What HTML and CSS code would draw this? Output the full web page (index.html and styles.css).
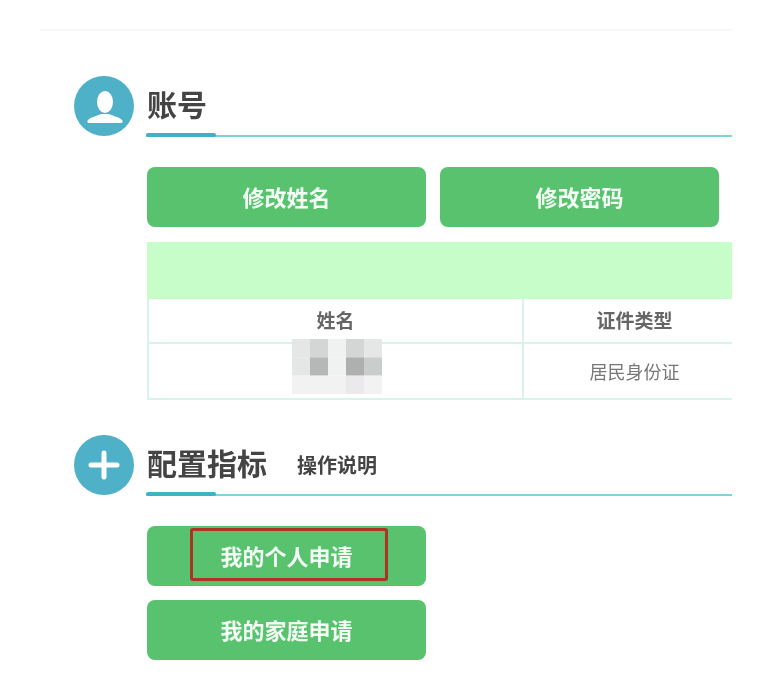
FILE: index.html
```html
<!DOCTYPE html>
<html lang="zh-CN">
<head>
<meta charset="utf-8">
<title>账号</title>
<link rel="stylesheet" href="styles.css">
</head>
<body>
<main class="page">
  <div class="top-rule"></div>

  <section class="section section-account">
    <svg class="badge" viewBox="0 0 60 60" aria-hidden="true">
      <circle cx="30" cy="30" r="30" fill="#4fb1c8"/>
      <ellipse cx="31" cy="26" rx="8" ry="11" fill="#fff"/>
      <path d="M15 47c-2 0-2-2-1-3 3-3 9-4 13-6h8c4 2 10 3 13 6 1 1 1 3-1 3z" fill="#fff"/>
    </svg>
    <div class="body">
      <h2 class="heading"><span class="title">账号</span></h2>
      <div class="btn-row">
        <button class="btn">修改姓名</button>
        <button class="btn">修改密码</button>
      </div>
      <table class="info">
        <colgroup><col class="col-name"><col class="col-type"></colgroup>
        <tr class="band"><td colspan="2"></td></tr>
        <tr class="head"><th>姓名</th><th>证件类型</th></tr>
        <tr class="row">
          <td class="masked">
            <svg class="mosaic" viewBox="0 0 5 3" preserveAspectRatio="none" aria-hidden="true">
              <rect class="c1" x="0" y="0" width="1" height="1"/><rect class="c2" x="1" y="0" width="1" height="1"/><rect class="c3" x="2" y="0" width="1" height="1"/><rect class="c2" x="3" y="0" width="1" height="1"/><rect class="c1" x="4" y="0" width="1" height="1"/>
              <rect class="c1" x="0" y="1" width="1" height="1"/><rect class="c4" x="1" y="1" width="1" height="1"/><rect class="c3" x="2" y="1" width="1" height="1"/><rect class="c5" x="3" y="1" width="1" height="1"/><rect class="c6" x="4" y="1" width="1" height="1"/>
              <rect class="c7" x="0" y="2" width="1" height="1"/><rect class="c7" x="1" y="2" width="1" height="1"/><rect class="c7" x="2" y="2" width="1" height="1"/><rect class="c8" x="3" y="2" width="1" height="1"/><rect class="c7" x="4" y="2" width="1" height="1"/>
            </svg>
          </td>
          <td>居民身份证</td>
        </tr>
      </table>
    </div>
  </section>

  <section class="section section-config">
    <svg class="badge" viewBox="0 0 60 60" aria-hidden="true">
      <circle cx="30" cy="30" r="30" fill="#4fb1c8"/>
      <path d="M30 18v24M17 30h26" stroke="#fff" stroke-width="5" stroke-linecap="round" fill="none"/>
    </svg>
    <div class="body">
      <h2 class="heading"><span class="title">配置指标</span><a class="help">操作说明</a></h2>
      <div class="btn-stack">
        <button class="btn"><span class="marked">我的个人申请</span></button>
        <button class="btn">我的家庭申请</button>
      </div>
    </div>
  </section>
</main>
</body>
</html>
```
FILE: styles.css
```css
* { box-sizing: border-box; }
html, body { margin: 0; background: #fff; }
body {
  font-family: "Noto Sans CJK SC", "Noto Sans", sans-serif;
  height: 694px;
  overflow: hidden;
}
.page {
  width: 732px;
  padding: 29px 0 0 40px;
  overflow: hidden;
  filter: blur(0.7px);
}
.top-rule { height: 2px; background: #f6f7f7; margin-bottom: 45px; }

.section { display: flex; align-items: flex-start; margin-left: 34px; }
.section-config { margin-top: 35px; }
.badge { width: 60px; height: 60px; flex: none; }
.body { margin-left: 12px; flex: none; width: 620px; }

.heading {
  position: relative;
  margin: 0;
  height: 61px;
  display: flex;
  align-items: center;
  gap: 30px;
  padding: 0 0 5px 1px;
  border-bottom: 2px solid #7fd3dc;
  color: #444;
}
.heading::after {
  content: "";
  position: absolute;
  left: 0;
  bottom: -2px;
  width: 70px;
  height: 4px;
  border-radius: 2px;
  background: #3fb3c6;
}
.title { font-size: 30px; line-height: 40px; font-weight: 700; }
.help { font-size: 20px; font-weight: 700; color: #444; margin-top: 4px; }

.btn {
  width: 279px;
  height: 60px;
  border: 0;
  padding: 0 0 3px;
  border-radius: 8px;
  background: #59c26e;
  color: #f4fff6;
  font: 700 22px/1 "Noto Sans CJK SC", "Noto Sans", sans-serif;
  display: flex;
  align-items: center;
  justify-content: center;
}
.btn-row { display: flex; gap: 14px; margin: 30px 0 15px 1px; }
.btn-stack { display: flex; flex-direction: column; gap: 14px; margin: 30px 0 0 1px; }
.marked {
  width: 198px;
  height: 53px;
  margin-left: 4px;
  padding: 0 4px 0 0;
  border: 3px solid #ad3322;
  border-radius: 3px;
  display: flex;
  align-items: center;
  justify-content: center;
}

.info {
  width: 600px;
  margin-left: 1px;
  border-collapse: collapse;
  table-layout: fixed;
}
.col-name { width: 375px; }
.info td, .info th { border: 2px solid #d8f3ea; padding: 0; text-align: center; }
.band td { height: 55px; background: #c6fdc9; border-color: #c6fdc9; }
.head th { height: 45px; padding-bottom: 2px; font-size: 19px; font-weight: 700; color: #666; }
.row td { height: 56px; font-size: 18px; color: #777; font-weight: 400; }
.masked { position: relative; }
.mosaic {
  position: absolute;
  left: 143px;
  top: -5px;
  width: 90px;
  height: 55px;
}
.c1 { fill: #e5e7e7; }
.c2 { fill: #d3d6d5; }
.c3 { fill: #f0f2f2; }
.c4 { fill: #b6b8b8; }
.c5 { fill: #adb0af; }
.c6 { fill: #c9cecd; }
.c7 { fill: #f2f2f3; }
.c8 { fill: #ebe9ec; }
```
